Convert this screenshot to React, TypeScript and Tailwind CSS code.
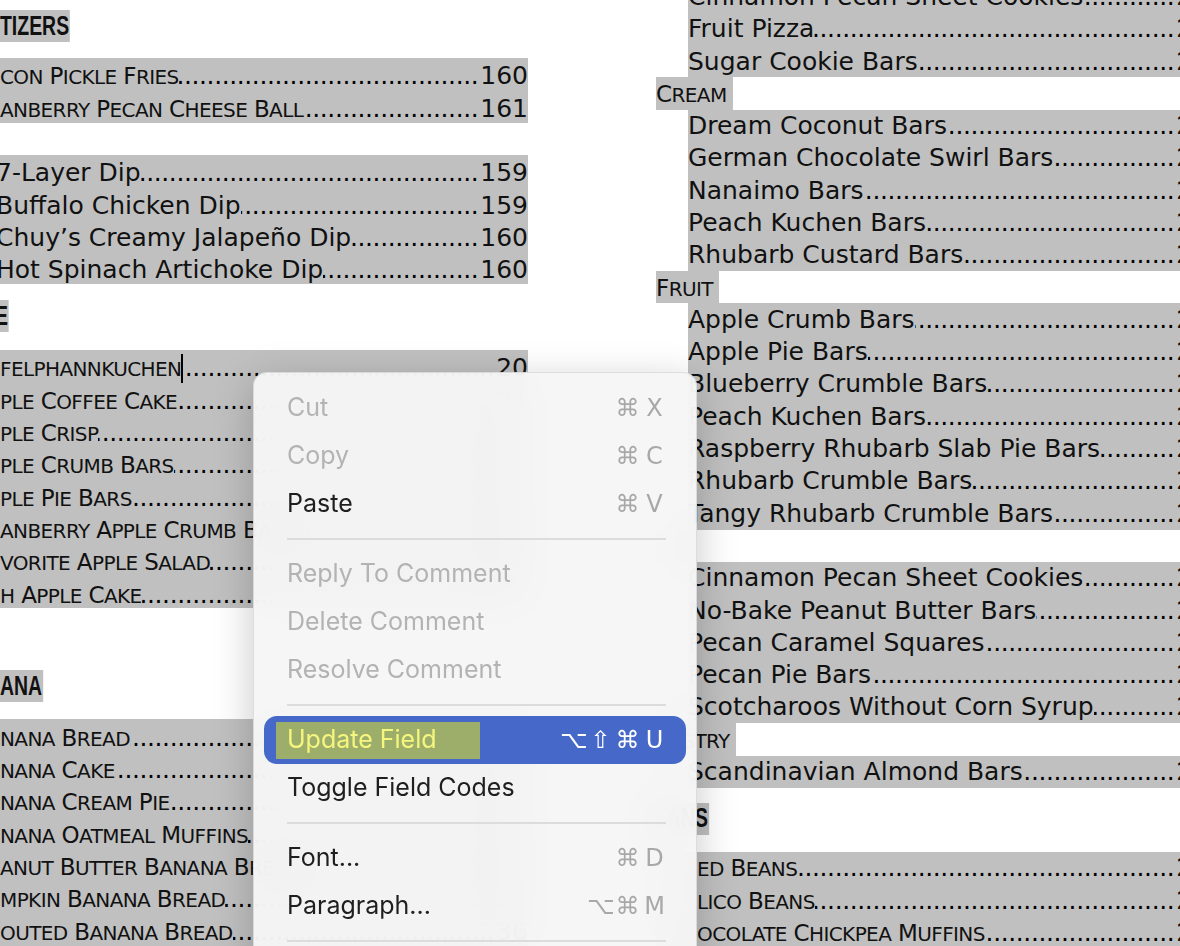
import React from 'react';

const DOTS = '.'.repeat(140);

type Entry = { t: string; p?: string; sc?: boolean; cursor?: boolean; pad?: boolean; cut?: boolean };

// Word-style small caps: lowercase runs drawn as smaller capitals
function SmallCaps({ text }: { text: string }) {
  const parts = text.match(/[a-zñ’]+|[^a-zñ’]+/g) ?? [];
  return (
    <span className="tracking-[-0.6px]">
      {parts.map((s, i) =>
        /[a-zñ]/.test(s[0]) ? (
          <span key={i} className="text-[20px] uppercase">
            {s}
          </span>
        ) : (
          <span key={i} className="text-[23px]">
            {s}
          </span>
        ),
      )}
    </span>
  );
}

function Row({ t, p, sc, cursor, pad, cut }: Entry) {
  return (
    <div className="flex h-[32.3px] items-center whitespace-nowrap">
      <span className={`${pad ? 'pl-[41px]' : ''} ${cut ? 'ml-[-4px]' : ''}`}>{sc ? <SmallCaps text={t} /> : t}</span>
      {cursor && <span className="h-[29px] w-[2px] shrink-0 bg-black" />}
      <span dir="rtl" className="min-w-0 flex-1 overflow-hidden pl-[3px] tracking-[-0.4px] text-black">
        {DOTS}
      </span>
      <span className="pl-[2px]">{p}</span>
    </div>
  );
}

function Block({ rows, className = '' }: { rows: Entry[]; className?: string }) {
  return (
    <div className={`bg-[#c0c0c0] ${className}`}>
      {rows.map((r, i) => (
        <Row key={i} {...r} />
      ))}
    </div>
  );
}

function BoldHead({ text, className = '' }: { text: string; className?: string }) {
  return (
    <div className={`flex h-[32px] ${className}`}>
      <span className="flex origin-left scale-x-[0.72] items-center bg-[#c0c0c0] pr-[1px] font-['Liberation_Sans',sans-serif] text-[27px] font-bold leading-none">
        {text}
      </span>
    </div>
  );
}

function CapsHead({ text }: { text: string }) {
  return (
    <div className="flex h-[32.3px]">
      <span className="flex items-center whitespace-nowrap bg-[#c0c0c0] pr-[6px]">
        <SmallCaps text={text} />
      </span>
    </div>
  );
}

const dips: Entry[] = [
  { t: '7-Layer Dip', p: '159', cut: true },
  { t: 'Buffalo Chicken Dip', p: '159', cut: true },
  { t: 'Chuy’s Creamy Jalapeño Dip ', p: '160', cut: true },
  { t: 'Hot Spinach Artichoke Dip ', p: '160', cut: true },
];

const apple: Entry[] = [
  { t: 'felphannkuchen', p: '20', sc: true, cursor: true },
  { t: 'ple Coffee Cake ', p: '21', sc: true },
  { t: 'ple Crisp ', p: '22', sc: true },
  { t: 'ple Crumb Bars', p: '23', sc: true },
  { t: 'ple Pie Bars ', p: '24', sc: true },
  { t: 'anberry Apple Crumb Bars', p: '25', sc: true },
  { t: 'vorite Apple Salad', p: '26', sc: true },
  { t: 'h Apple Cake ', p: '27', sc: true },
];

const banana: Entry[] = [
  { t: 'nana Bread ', p: '30', sc: true },
  { t: 'nana Cake', p: '31', sc: true },
  { t: 'nana Cream Pie', p: '32', sc: true },
  { t: 'nana Oatmeal Muffins', p: '33', sc: true },
  { t: 'anut Butter Banana Bread', p: '34', sc: true },
  { t: 'mpkin Banana Bread', p: '35', sc: true },
  { t: 'outed Banana Bread', p: '36', sc: true },
];

const cookies: Entry[] = [
  { t: 'Cinnamon Pecan Sheet Cookies ', p: '212' },
  { t: 'Fruit Pizza', p: '213' },
  { t: 'Sugar Cookie Bars', p: '214' },
];

const cream: Entry[] = [
  { t: 'Dream Coconut Bars', p: '215' },
  { t: 'German Chocolate Swirl Bars ', p: '216' },
  { t: 'Nanaimo Bars', p: '217' },
  { t: 'Peach Kuchen Bars ', p: '218' },
  { t: 'Rhubarb Custard Bars ', p: '219' },
];

const fruit: Entry[] = [
  { t: 'Apple Crumb Bars ', p: '220' },
  { t: 'Apple Pie Bars ', p: '221' },
  { t: 'Blueberry Crumble Bars', p: '222' },
  { t: 'Peach Kuchen Bars ', p: '223' },
  { t: 'Raspberry Rhubarb Slab Pie Bars', p: '224' },
  { t: 'Rhubarb Crumble Bars', p: '225' },
  { t: 'Tangy Rhubarb Crumble Bars ', p: '226' },
];

const nuts: Entry[] = [
  { t: 'Cinnamon Pecan Sheet Cookies ', p: '227' },
  { t: 'No-Bake Peanut Butter Bars ', p: '228' },
  { t: 'Pecan Caramel Squares ', p: '229' },
  { t: 'Pecan Pie Bars ', p: '230' },
  { t: 'Scotcharoos Without Corn Syrup', p: '231' },
];

const beans: Entry[] = [
  { t: 'ed Beans', p: '240', sc: true, pad: true },
  { t: 'lico Beans ', p: '241', sc: true, pad: true },
  { t: 'ocolate Chickpea Muffins ', p: '242', sc: true, pad: true },
];

function Keys({ keys }: { keys: string[] }) {
  return (
    <span className="flex font-['DejaVu_Sans','Inter',sans-serif] text-[24px]">
      {keys.map((k, i) => (
        <span key={i} className="w-[27px] text-center">
          {k}
        </span>
      ))}
    </span>
  );
}

function Item({ label, keys, disabled }: { label: string; keys?: string[]; disabled?: boolean }) {
  return (
    <div className="flex h-[48px] items-center justify-between pl-[23px] pr-[18px]">
      <span className={disabled ? 'text-[#b3b3b3]' : 'text-[#1f1f1f]'}>{label}</span>
      {keys && (
        <span className="text-[#a8a8a8]">
          <Keys keys={keys} />
        </span>
      )}
    </div>
  );
}

function Sep() {
  return (
    <div className="flex h-[22px] items-center pl-[23px] pr-[20px]">
      <div className="h-[2px] w-full bg-[#dcdcdc]" />
    </div>
  );
}

export default function App() {
  return (
    <div className="relative h-[946px] w-[1180px] overflow-hidden bg-white font-['DejaVu_Sans',sans-serif] text-[25px] text-[#111]">
      <div className="flex">
        {/* left column */}
        <div className="w-[528px] shrink-0 pt-[10px] [&_.bg-\[\#c0c0c0\]>div]:pt-[4px]">
          <BoldHead text="TIZERS" />
          <Block
            className="mt-[16px]"
            rows={[
              { t: 'con Pickle Fries', p: '160', sc: true },
              { t: 'anberry Pecan Cheese Ball ', p: '161', sc: true },
            ]}
          />
          <Block className="mt-[32.3px]" rows={dips} />
          <BoldHead text="E" className="ml-[-5px] mt-[16px]" />
          <Block className="mt-[18px]" rows={apple} />
          <BoldHead text="ANA" className="mt-[62px]" />
          <Block className="mt-[17px]" rows={banana} />
        </div>

        {/* right column */}
        <div className="ml-[128px] mt-[-19.5px] w-[568px] shrink-0">
          <Block className="ml-[32px]" rows={cookies} />
          <CapsHead text="Cream" />
          <Block className="ml-[32px]" rows={cream} />
          <CapsHead text="Fruit" />
          <Block className="ml-[32px]" rows={fruit} />
          <div className="h-[32.3px] w-[40px] bg-[#c0c0c0]" />
          <Block className="ml-[32px]" rows={nuts} />
          <CapsHead text="Pastry" />
          <Block className="ml-[32px]" rows={[{ t: 'Scandinavian Almond Bars ', p: '232' }]} />
          <BoldHead text="BEANS" className="ml-[-16px] mt-[15px]" />
          <Block className="mt-[17px]" rows={beans} />
        </div>
      </div>

      {/* context menu */}
      <div className="absolute left-[253px] top-[372px] h-[600px] w-[444px] rounded-[14px] border border-black/10 bg-[#f5f5f5]/95 px-[10px] pt-[11px] font-['Inter',sans-serif] text-[25px] shadow-[0_10px_40px_rgba(0,0,0,0.22)] backdrop-blur-xl">
        <Item label="Cut" keys={['⌘', 'X']} disabled />
        <Item label="Copy" keys={['⌘', 'C']} disabled />
        <Item label="Paste" keys={['⌘', 'V']} />
        <Sep />
        <Item label="Reply To Comment" disabled />
        <Item label="Delete Comment" disabled />
        <Item label="Resolve Comment" disabled />
        <Sep />
        <div className="flex h-[48px] items-center justify-between rounded-[13px] bg-[#4668c8] pl-[23px] pr-[18px]">
          <span className="ml-[-11px] flex h-[37px] w-[204px] items-center bg-[#9cae6a] pl-[11px] text-[#f6f67e]">
            Update Field
          </span>
          <span className="text-white">
            <Keys keys={['⌥', '⇧', '⌘', 'U']} />
          </span>
        </div>
        <Item label="Toggle Field Codes" />
        <Sep />
        <Item label="Font..." keys={['⌘', 'D']} />
        <Item label="Paragraph..." keys={['⌥', '⌘', 'M']} />
        <Sep />
      </div>
    </div>
  );
}
